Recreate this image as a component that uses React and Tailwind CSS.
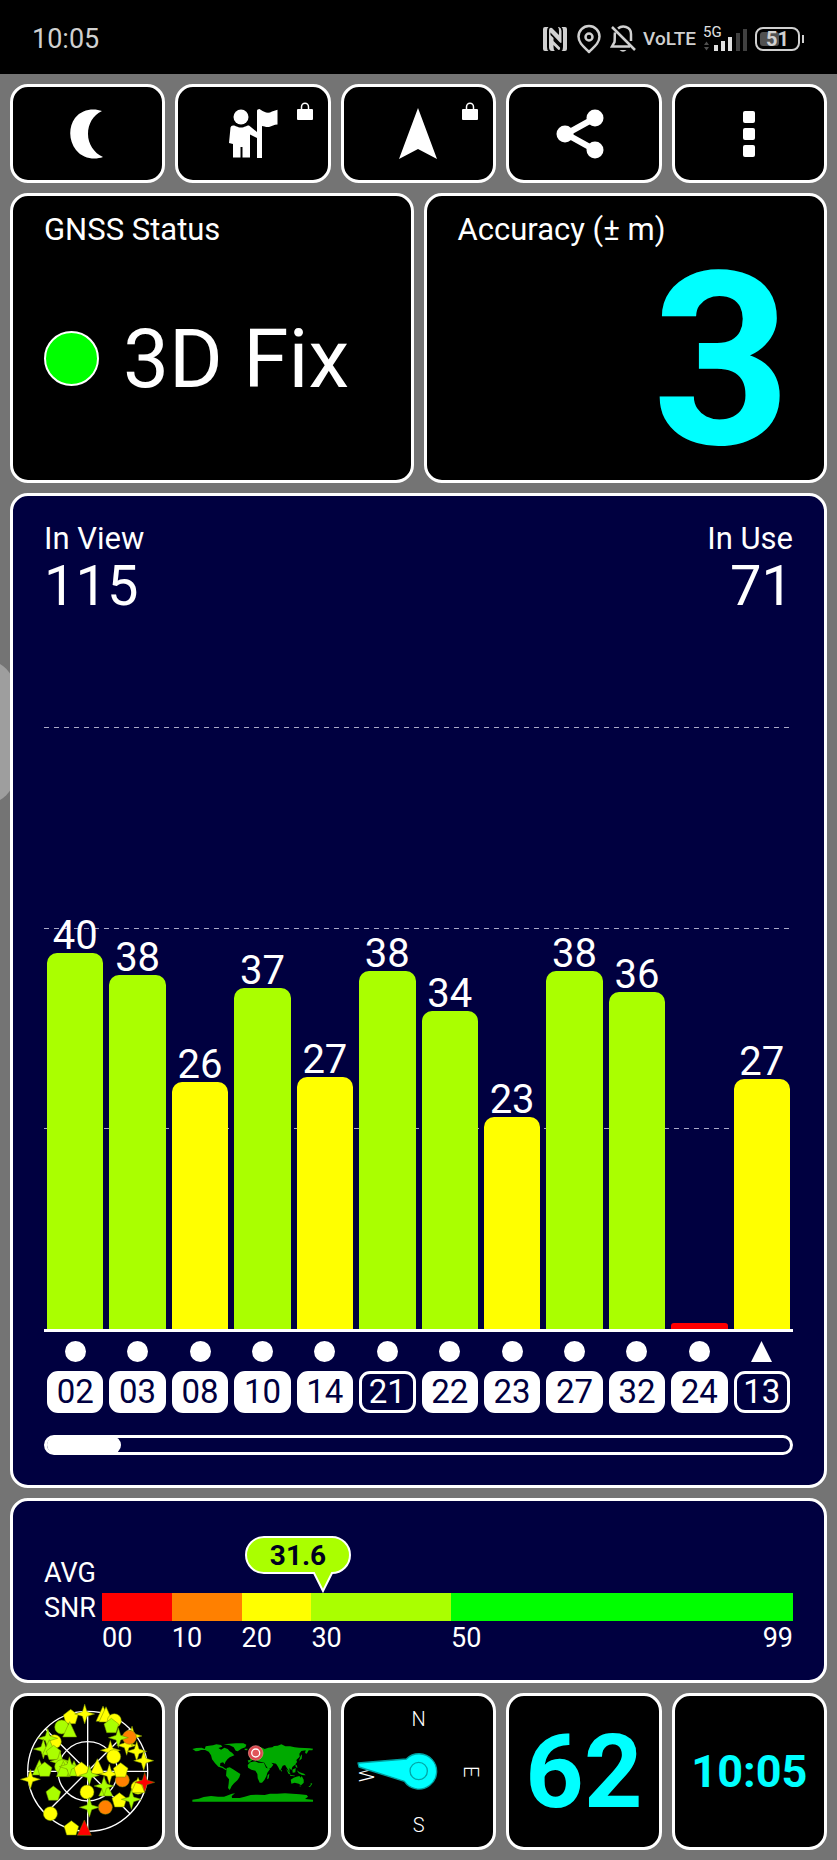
const LIME = "#aaff00";
const YELLOW = "#ffff00";
const RED = "#ff0000";
const ORANGE = "#ff8000";

// level is the bar height in percent of the plot
const satellites = [
  { id: "02", snr: 40, level: 62.5, color: LIME },
  { id: "03", snr: 38, level: 58.8, color: LIME },
  { id: "08", snr: 26, level: 41, color: YELLOW },
  { id: "10", snr: 37, level: 56.6, color: LIME },
  { id: "14", snr: 27, level: 41.9, color: YELLOW },
  { id: "21", snr: 38, level: 59.4, color: LIME, outlined: true },
  { id: "22", snr: 34, level: 52.8, color: LIME },
  { id: "23", snr: 23, level: 35.2, color: YELLOW },
  { id: "27", snr: 38, level: 59.4, color: LIME },
  { id: "32", snr: 36, level: 56, color: LIME },
  { id: "24", snr: null, level: 1, color: RED },
  { id: "13", snr: 27, level: 41.6, color: YELLOW, outlined: true, shape: "triangle" },
];

const snrBands = [
  { from: 0, to: 10, color: RED },
  { from: 10, to: 20, color: ORANGE },
  { from: 20, to: 30, color: YELLOW },
  { from: 30, to: 50, color: LIME },
  { from: 50, to: 99, color: "#00ff00" },
];

// [shape, x, y, color]
const skyMarks = [
  ["pentagon", 212, 110, YELLOW],
  ["star", 254, 102, YELLOW],
  ["triangle", 309, 104, YELLOW],
  ["triangle", 318, 106, YELLOW],
  ["circle", 343, 122, YELLOW],
  ["pentagon", 334, 137, LIME],
  ["circle", 185, 141, LIME],
  ["triangle", 209, 151, LIME],
  ["circle", 163, 185, YELLOW],
  ["star", 143, 175, LIME],
  ["star", 130, 207, LIME],
  ["triangle", 148, 205, LIME],
  ["pentagon", 161, 218, LIME],
  ["star", 380, 196, YELLOW],
  ["star", 396, 168, YELLOW],
  ["circle", 388, 172, ORANGE],
  ["star", 355, 173, LIME],
  ["star", 410, 214, YELLOW],
  ["star", 431, 242, YELLOW],
  ["star", 331, 211, YELLOW],
  ["circle", 341, 230, YELLOW],
  ["star", 180, 244, LIME],
  ["triangle", 118, 265, LIME],
  ["pentagon", 134, 268, LIME],
  ["circle", 185, 260, LIME],
  ["triangle", 190, 270, LIME],
  ["triangle", 222, 268, LIME],
  ["star", 208, 260, LIME],
  ["pentagon", 244, 268, YELLOW],
  ["triangle", 292, 262, YELLOW],
  ["star", 268, 286, LIME],
  ["star", 328, 282, YELLOW],
  ["circle", 367, 300, ORANGE],
  ["pentagon", 362, 270, YELLOW],
  ["star", 91, 298, YELLOW],
  ["circle", 261, 336, YELLOW],
  ["triangle", 317, 328, LIME],
  ["star", 312, 318, LIME],
  ["pentagon", 160, 340, LIME],
  ["circle", 414, 322, YELLOW],
  ["triangle", 414, 318, YELLOW],
  ["star", 434, 307, RED],
  ["pentagon", 358, 360, YELLOW],
  ["star", 394, 358, LIME],
  ["circle", 316, 382, ORANGE],
  ["star", 268, 382, LIME],
  ["circle", 151, 401, YELLOW],
  ["pentagon", 214, 444, YELLOW],
  ["triangle", 253, 446, RED],
];

function SkyMark({ shape, x, y, color }) {
  const style = { fill: color, stroke: "#6f8a00", strokeWidth: 1.5 };
  const at = `translate(${x} ${y})`;
  switch (shape) {
    case "circle":
      return <circle r="21" transform={at} {...style} />;
    case "pentagon":
      return <path d="M0-22 22-5 14 21H-14L-22-5Z" transform={at} {...style} />;
    case "triangle":
      return <path d="M0-26 21 20H-21Z" transform={at} {...style} />;
    default:
      return <path d="M0-30 7-7 30 0 7 7 0 30-7 7-30 0-7-7Z" transform={at} {...style} />;
  }
}

function SkyPlot() {
  return (
    <svg viewBox="39 48 448 453" className="h-full w-full">
      <g fill="none" stroke="#fff" strokeWidth="4">
        <circle cx="263" cy="274" r="180" />
        <circle cx="263" cy="274" r="89" />
        <path d="M263 94V454M83 274H443M136 147 390 401M390 147 136 401" />
      </g>
      {skyMarks.map(([shape, x, y, color], i) => (
        <SkyMark key={i} shape={shape} x={x} y={y} color={color} />
      ))}
    </svg>
  );
}

function WorldMap() {
  return (
    <svg viewBox="535 48 448 453" className="h-full w-full">
      <g fill="#00aa00">
        <path d="M578 207 590 204 606 203 615 207 618 199 628 197 640 196 650 193 664 195 668 200 656 204 664 209 674 203 684 207 690 214 697 218 704 226 697 229 690 232 683 238 677 246 675 253 670 247 662 249 661 257 669 260 675 265 681 268 679 271 668 264 656 260 646 250 637 238 634 226 627 215 616 210 604 210 596 213 588 214Z" />
        <path d="M672 193 690 191 709 190 731 190 740 194 737 202 725 206 714 214 708 212 702 202 690 196Z" />
        <path d="M681 264 690 262 700 268 708 273 722 282 719 292 713 301 703 310 696 318 692 326 690 330 685 324 687 310 688 298 679 287 680 275Z" />
        <path d="M747 249 744 241 752 240 750 231 758 226 766 219 763 210 772 203 784 202 795 207 806 203 818 202 823 198 834 197 845 193 857 199 871 199 885 202 898 203 915 204 930 205 940 206 938 211 927 211 921 221 916 219 918 211 905 213 899 221 900 230 890 240 892 246 886 254 878 261 875 271 869 264 870 278 862 265 856 255 849 257 844 268 841 272 835 260 829 251 815 248 821 254 814 263 806 268 799 257 794 248 784 246 773 243 768 238 757 241Z" />
        <path d="M752 247 766 244 776 248 793 249 799 263 811 267 803 278 800 289 794 300 787 308 780 308 774 295 773 282 767 272 755 269 745 263 744 255Z" />
        <path d="M804 285 809 281 807 295 802 298ZM843 268 847 272 844 275ZM859 266 868 276 873 283 867 282ZM878 269 888 264 887 277 879 278ZM891 271 900 277 913 281 918 286 907 285 897 280ZM871 284 886 287 884 289 871 287ZM887 252 892 257 893 264 888 261ZM903 228 907 223 906 236 898 242Z" />
        <path d="M873 299 882 293 890 290 899 288 903 293 906 288 912 299 912 308 904 316 897 311 885 308 875 311ZM933 309 938 311 931 321 926 321 933 315ZM899 317 904 317 901 320ZM749 219 755 223 756 230 748 231ZM735 206 744 206 742 211 735 210Z" />
        <path d="M578 359 597 356 612 351 634 348 655 350 673 350 687 345 697 341 706 340 696 348 697 354 720 354 735 350 753 345 774 344 795 345 811 341 832 341 856 340 878 341 900 343 921 345 925 350 916 357 940 359V365H578Z" />
      </g>
      <circle cx="768" cy="219" r="22" fill="#d9484f" stroke="#f08a8a" strokeWidth="2" />
      <circle cx="768" cy="219" r="12" fill="#e0555a" stroke="#fff" strokeWidth="4" />
    </svg>
  );
}

function Compass() {
  return (
    <svg viewBox="41 48 448 453" className="h-full w-full">
      <g fill="#fff" fontFamily="Roboto, sans-serif" fontSize="60" fontWeight="300" textAnchor="middle">
        <text x="265" y="137">N</text>
        <text x="265" y="456">S</text>
        <text transform="translate(401 275) rotate(90)">E</text>
        <text transform="translate(130 279) rotate(-90)">W</text>
      </g>
      <path
        d="M83 249 228 237A53 53 0 1 1 222 304L86 261Z"
        fill="#00ffff"
        stroke="#00a0a0"
        strokeWidth="4"
        strokeLinejoin="round"
      />
      <circle cx="265" cy="273" r="26" fill="none" stroke="#00a8a8" strokeWidth="4" />
    </svg>
  );
}

function MoonIcon() {
  return (
    <svg viewBox="0 0 48 50" className="h-[50px] w-[48px]" fill="#fff">
      <path d="M38 2C30-1 18 0 11 9 4 19 5 32 12 41 19 50 31 51 39 48 30 44 24 35 24 25 24 15 29 6 38 2Z" />
    </svg>
  );
}

function GuideIcon() {
  return (
    <svg viewBox="0 0 50 50" className="h-[50px] w-[50px]" fill="#fff">
      <circle cx="13" cy="8" r="7.5" />
      <path d="M5 16.500C8 16.500 9 18.500 13 18.500S18 16.500 21 16.500L29 23V1.500Q29 0 31.500 0L33 1C36 3 40 5 44 2.500L49.500 .8V15.500C46 15.500 44 17 41 18 38 18.500 36 17 34 17V49H29V29L22 25.500V48.500H14.500V38H12.500V48.500H5V35L1 34 2.500 18.500Q3 16.500 5 16.500Z" />
    </svg>
  );
}

function ArrowIcon() {
  return (
    <svg viewBox="0 0 50 52" className="h-[52px] w-[50px]" fill="#fff">
      <path d="M25 0 44 51 25 41 6 51Z" />
    </svg>
  );
}

function ShareIcon() {
  return (
    <svg viewBox="0 0 56 50" className="h-[50px] w-[56px]" fill="#fff">
      <path d="M39 9 10 25 39 41" fill="none" stroke="#fff" strokeWidth="6" />
      <circle cx="9" cy="25" r="8.500" />
      <circle cx="39" cy="9" r="8.500" />
      <circle cx="39" cy="41" r="8.500" />
    </svg>
  );
}

function DotsIcon() {
  return (
    <svg viewBox="0 0 12 46" className="h-[46px] w-[12px]" fill="#fff">
      <rect y="0" width="12" height="12" rx="2" />
      <rect y="17" width="12" height="12" rx="2" />
      <rect y="34" width="12" height="12" rx="2" />
    </svg>
  );
}

function LockIcon() {
  return (
    <svg viewBox="0 0 16 18" className="absolute top-[15px] right-[15px] h-[18px] w-[16px]">
      <rect y="7" width="16" height="11" rx="1" fill="#fff" />
      <path d="M4.500 8V5a3.500 3.700 0 0 1 7 0V8" fill="none" stroke="#fff" strokeWidth="1.500" />
    </svg>
  );
}

function StatusBar() {
  return (
    <header className="flex h-[74px] items-center justify-between bg-black pt-[3px] pr-[33px] pl-[32px] text-[#d0d0d0]">
      <span className="text-[27px] leading-[32px]">10:05</span>
      <div className="flex items-center">
        {/* nfc */}
        <svg viewBox="0 0 24 24" className="mr-[9px] h-6 w-6" fill="#d0d0d0">
          <path d="M2 0H5.500Q4 1 4 4V20Q4 23 5.500 24H2Q0 24 0 22V2Q0 0 2 0Z" />
          <path d="M22 24H18.500Q20 23 20 20V4Q20 1 18.500 0H22Q24 0 24 2V22Q24 24 22 24Z" />
          <path d="M6 4Q6 0 9 1L16 8V4Q16 1 15 0H16Q18.500 1 18.500 4V15Q18.500 17 16.500 15L7.500 5.500V22Q6 21 6 19Z" />
          <path d="M8.500 9 10.500 11V20Q10.500 23 12 24H9Q6 24 6 20V7ZM10.500 14 17 20.500Q17.500 23 15.500 23L10.500 18Z" />
        </svg>
        {/* location */}
        <svg viewBox="0 0 26 30" className="mr-[8px] h-[30px] w-[26px]" fill="none" stroke="#d0d0d0" strokeWidth="2.500">
          <path d="M13 28C8 23 2.500 19 2.500 12.500a10.500 10.500 0 0 1 21 0C23.500 19 18 23 13 28Z" strokeLinejoin="round" />
          <circle cx="13" cy="13" r="3.500" />
        </svg>
        {/* silent */}
        <svg viewBox="0 0 26 28" className="mr-[7px] h-[28px] w-[26px]" fill="none" stroke="#d0d0d0" strokeWidth="2.500">
          <path d="M2 2 25 25M8 3.500C12 0 21 1 21 9V16M5 7.500C4.500 10 5 14 4.500 17L2 21.500H20" />
          <path d="M9.500 25H16.500Q13 28.500 9.500 25Z" fill="#d0d0d0" stroke="none" />
        </svg>
        <span className="mr-[7px] text-[19px] leading-6 font-medium">VoLTE</span>
        <svg viewBox="0 0 44 28" className="mr-[8px] h-[28px] w-[44px] overflow-visible" fill="#e0e0e0">
          <text x="0" y="12" fontSize="15" fontFamily="Roboto, sans-serif">5G</text>
          <rect x="11" y="20" width="4" height="6" />
          <rect x="18" y="16" width="4" height="10" />
          <rect x="25" y="12" width="4" height="14" />
          <rect x="33" y="8" width="4" height="18" fill="#404040" />
          <rect x="40" y="4" width="4" height="22" fill="#404040" />
          <path d="M1 20 3.500 16.500 6 20ZM1 22H6L3.500 25.500Z" fill="#505050" />
        </svg>
        <div className="flex items-center gap-[2px]">
          <div className="flex h-[24px] w-[45px] items-center rounded-[8px] border-2 border-[#d0d0d0] p-[3px]">
            <div className="flex h-full w-[19px] items-center justify-start rounded-[3px] bg-[#505050] pl-[6px]">
              <span className="text-[20px] leading-5 font-bold">51</span>
            </div>
          </div>
          <div className="h-2 w-[2px] bg-[#d0d0d0]" />
        </div>
      </div>
    </header>
  );
}

function ToolButton({ label, locked, children }) {
  return (
    <button
      type="button"
      aria-label={label}
      className="relative flex h-[99px] items-center justify-center rounded-[18px] border-[3px] border-white bg-black"
    >
      {children}
      {locked && <LockIcon />}
    </button>
  );
}

function Tile({ label, children }) {
  return (
    <button
      type="button"
      aria-label={label}
      className="flex h-[157px] items-center justify-center overflow-hidden rounded-[18px] border-[3px] border-white bg-black font-bold text-[#00ffff]"
    >
      {children}
    </button>
  );
}

function SignalChart() {
  return (
    <section className="relative rounded-[18px] border-[3px] border-white bg-[#000040] px-[31px] pt-[27px] pb-[30px]">
      <div className="flex justify-between">
        <div>
          <div className="text-[31px] leading-[32px]">In View</div>
          <div className="mt-[9px] text-[56px] leading-[44px]">115</div>
        </div>
        <div className="text-right">
          <div className="text-[31px] leading-[32px]">In Use</div>
          <div className="mt-[9px] text-[56px] leading-[44px]">71</div>
        </div>
      </div>

      <div className="relative mt-[119px] h-[605px] border-b-[3px] border-white">
        <div className="absolute inset-0 grid grid-rows-3">
          {[60, 40, 20].map((line) => (
            <div key={line}>
              <div className="h-px bg-[repeating-linear-gradient(90deg,#a8a8c4_0_5px,transparent_5px_10px)]" />
            </div>
          ))}
        </div>
        <div className="relative grid h-full grid-cols-12">
          {satellites.map((sat) => (
            <div key={sat.id} className="flex h-full flex-col justify-end px-[3px]">
              <div className="text-center text-[40px] leading-[34px]">{sat.snr}</div>
              <div
                className={`shrink-0 ${sat.snr ? "rounded-t-[10px]" : "rounded-t-[3px]"}`}
                style={{ height: `${sat.level}%`, backgroundColor: sat.color }}
              />
            </div>
          ))}
        </div>
      </div>

      <div className="mt-[9px] grid grid-cols-12">
        {satellites.map((sat) => (
          <div key={sat.id} className="flex flex-col items-center gap-[9px] px-[3px]">
            <svg viewBox="0 0 21 21" className="h-[21px] w-[21px]" fill="#fff">
              {sat.shape === "triangle" ? <path d="M10.500 0 21 21H0Z" /> : <circle cx="10.500" cy="10.500" r="10.500" />}
            </svg>
            <div
              className={`w-full rounded-[11px] border-[3px] border-white text-center text-[33px] leading-[36px] ${
                sat.outlined ? "text-white" : "bg-white text-[#000040]"
              }`}
            >
              {sat.id}
            </div>
          </div>
        ))}
      </div>

      <div className="mt-[22px] h-[20px] rounded-full border-[3px] border-white">
        <div className="-my-[2px] h-[18px] w-[10%] rounded-full bg-white" />
      </div>
    </section>
  );
}

function AverageSnr({ value }) {
  return (
    <section className="flex rounded-[18px] border-[3px] border-white bg-[#000040] px-[31px] pt-[55px] pb-[25px] text-[27px] leading-[34px]">
      <div className="w-[58px] leading-[35px]">
        <div>AVG</div>
        <div>SNR</div>
      </div>
      <div className="relative mt-[37px] flex flex-1">
        {snrBands.map((band) => (
          <div key={band.from} className="basis-0" style={{ flexGrow: band.to - band.from }}>
            <div className="h-[28px]" style={{ backgroundColor: band.color }} />
            <div className="flex justify-between">
              <span>{String(band.from).padStart(2, "0")}</span>
              {band.to === 99 && <span>99</span>}
            </div>
          </div>
        ))}
        <div className="absolute top-0" style={{ left: `${(value / 99) * 100}%` }}>
          <svg viewBox="0 0 106 58" className="absolute bottom-0 -left-[78px] h-[58px] w-[106px] max-w-none">
            <path
              d="M19 2H87A18 18 0 0 1 87 38L78 56 69 38H19A18 18 0 0 1 19 2Z"
              fill={LIME}
              stroke="#fff"
              strokeWidth="2"
            />
            <text x="53" y="30" fontSize="28" fontWeight="700" fontFamily="Roboto, sans-serif" textAnchor="middle" fill="#000020">
              {value}
            </text>
          </svg>
        </div>
      </div>
    </section>
  );
}

export default function App() {
  return (
    <div className="relative overflow-hidden bg-[#747474] font-[Roboto,sans-serif] text-white">
      <StatusBar />
      {/* edge panel handle, mostly hidden behind the chart */}
      <div className="absolute top-[660px] -left-[45px] h-[144px] w-[60px] rounded-[30px] bg-[#9e9e9e]" />

      <main className="flex flex-col gap-[10px] p-[10px]">
        <nav className="grid grid-cols-5 gap-[10px]">
          <ToolButton label="Night mode">
            <MoonIcon />
          </ToolButton>
          <ToolButton label="Guide" locked>
            <GuideIcon />
          </ToolButton>
          <ToolButton label="Navigate" locked>
            <ArrowIcon />
          </ToolButton>
          <ToolButton label="Share">
            <ShareIcon />
          </ToolButton>
          <ToolButton label="More">
            <DotsIcon />
          </ToolButton>
        </nav>

        <div className="grid grid-cols-2 gap-[10px]">
          <section className="flex h-[290px] flex-col rounded-[18px] border-[3px] border-white bg-black px-[31px] pt-[18px]">
            <h2 className="text-[31px] leading-[32px]">GNSS Status</h2>
            <div className="flex flex-1 items-center gap-6 pb-[9px]">
              <div className="h-[55px] w-[55px] rounded-full border-2 border-white bg-[#00ff00]" />
              <div className="text-[82px] leading-[80px] whitespace-nowrap">3D Fix</div>
            </div>
          </section>
          <section className="h-[290px] rounded-[18px] border-[3px] border-white bg-black px-[31px] pt-[18px]">
            <h2 className="text-[31px] leading-[32px]">Accuracy (± m)</h2>
            <div className="pr-[2px] text-right text-[242px] leading-[230px] font-bold text-[#00ffff]">3</div>
          </section>
        </div>

        <SignalChart />
        <AverageSnr value={31.6} />

        <div className="grid grid-cols-5 gap-[10px]">
          <Tile label="Sky view">
            <SkyPlot />
          </Tile>
          <Tile label="Map">
            <WorldMap />
          </Tile>
          <Tile label="Compass">
            <Compass />
          </Tile>
          <Tile>
            <span className="text-[102px] leading-none">62</span>
          </Tile>
          <Tile>
            <span className="text-[45px] leading-none">10:05</span>
          </Tile>
        </div>
      </main>
    </div>
  );
}
